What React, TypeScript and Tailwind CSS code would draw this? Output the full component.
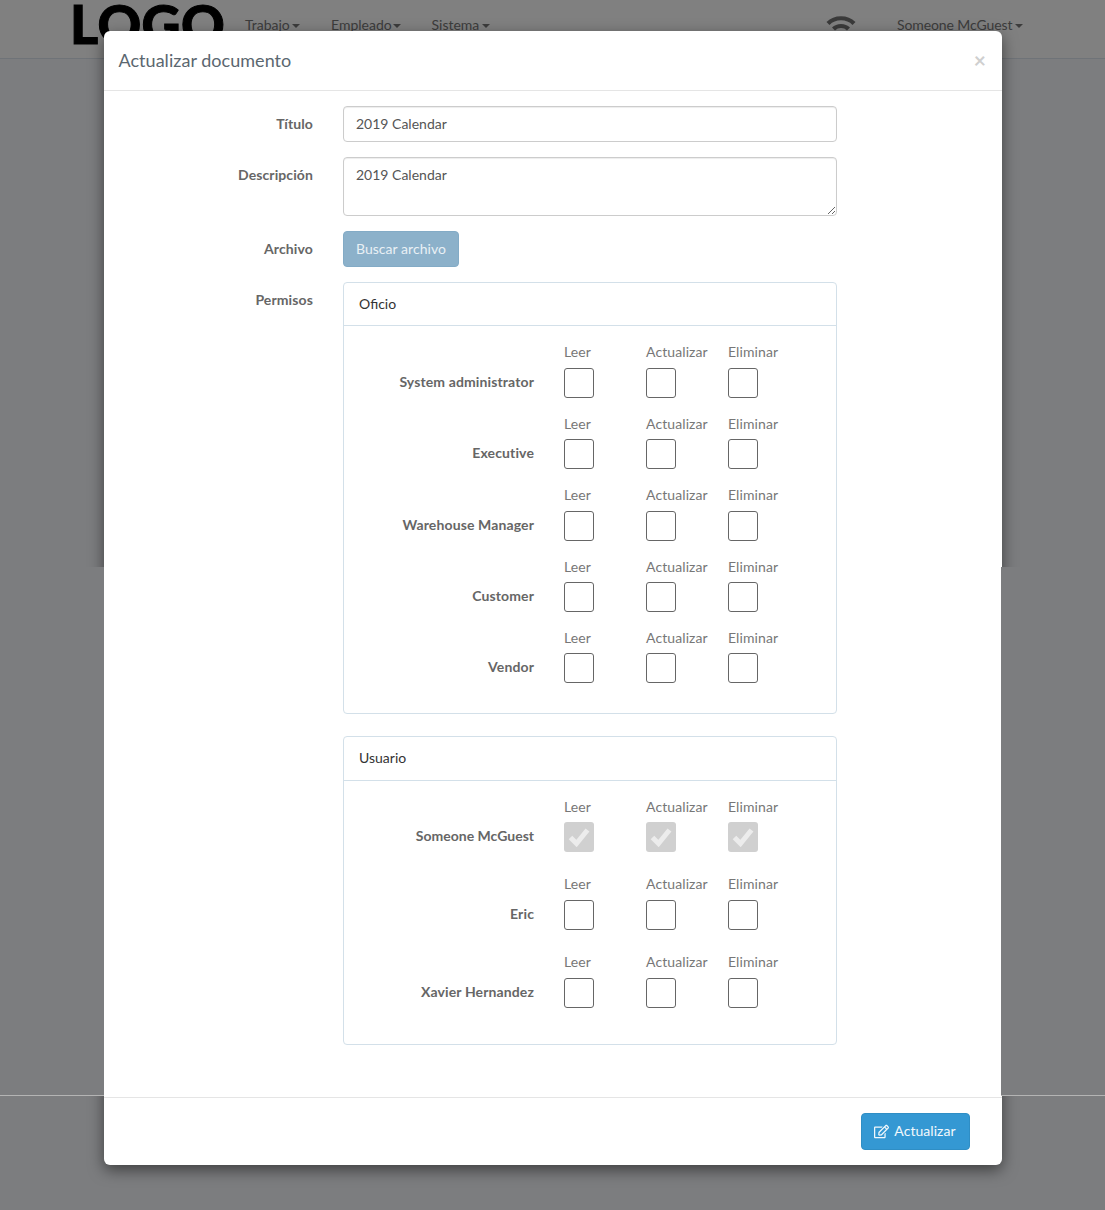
import React from "react";
import { FaRegEdit } from "react-icons/fa";

const perms = ["Leer", "Actualizar", "Eliminar"];
const roles = ["System administrator", "Executive", "Warehouse Manager", "Customer", "Vendor"];
const users = ["Someone McGuest", "Eric", "Xavier Hernandez"];

const Caret: React.FC<{ className?: string }> = ({ className = "ml-[2px]" }) => (
  <span className={"inline-block h-0 w-0 border-x-4 border-t-4 border-x-transparent border-t-[#3c3c3c] align-middle " + className} />
);

const PermRow: React.FC<{ name: string; checked?: boolean; tall?: boolean }> = ({ name, checked, tall }) => (
  <div className={tall ? "flex h-[77.6px]" : "flex h-[71.45px]"}>
    <div
      className={
        "w-[190px] shrink-0 text-right font-bold text-[#666] " +
        (tall ? "pt-[29.4px] " : "pt-[29.65px] ") +
        (checked ? "tracking-normal" : "tracking-[0.12px]")
      }
    >
      {name}
    </div>
    <div className="ml-[30px] flex">
      {perms.map((p) => (
        <div key={p} className="w-[82px] shrink-0">
          <div className={tall ? "mt-[-0.2px] h-[20px] tracking-[0.1px] text-[#777]" : "h-[20px] pt-[0.2px] tracking-[0.1px] text-[#777]"}>{p}</div>
          <div
            className={
              checked
                ? "mt-[5.6px] flex h-[30px] w-[30px] items-center justify-center rounded-[3px] bg-[#d0d0d0]"
                : tall
                  ? "mt-[5.6px] h-[30px] w-[30px] rounded-[3px] border border-[#666] bg-white"
                  : "mt-[5.63px] h-[30px] w-[30px] rounded-[3px] border border-[#666] bg-white"
            }
          >
            {checked && (
              <svg viewBox="0 0 22 20" className="h-[20px] w-[22px]" fill="none" stroke="#ececec" strokeWidth="5">
                <path d="M2.5 10.5L8.5 16.5L19.5 3" />
              </svg>
            )}
          </div>
        </div>
      ))}
    </div>
  </div>
);

const Panel: React.FC<{ title: string; children: React.ReactNode; className: string; headClass: string }> = ({
  title,
  children,
  className,
  headClass,
}) => (
  <div className={"w-[494px] rounded-[4px] border border-[#d3e0e9] bg-white " + className}>
    <div className={"flex items-center border-b border-[#d3e0e9] px-[15px] text-[#333] " + headClass}>{title}</div>
    {children}
  </div>
);

export default function App() {
  return (
    <div className="relative h-[1210px] w-[1105px] overflow-hidden bg-[#7c7d7f] font-['Lato',sans-serif] text-[14px] leading-5">
      {/* page behind the backdrop */}
      <div className="flex h-[59px] items-start border-b border-[#6f7378] bg-[#808080] text-[#3c3c3c]">
        <div className="ml-[70px] mt-[-8px] w-[175px] text-[54px] font-black leading-[64px] tracking-[0.4px] text-black [-webkit-text-stroke:1px_#000]">
          LOGO
        </div>
        <div className="mt-[15px] w-[86px]">Trabajo<Caret /></div>
        <div className="mt-[15px] w-[100.5px]">Empleado<Caret className="ml-[1px]" /></div>
        <div className="mt-[15px] w-[394.5px]">Sistema<Caret className="ml-[3px]" /></div>
        <svg viewBox="0 0 30 24" className="mt-[15px] h-[24px] w-[30px] text-[#3a3a3a]" fill="none" stroke="currentColor" strokeWidth="4.2">
          <path d="M2 8.5C9 1.5 21 1.5 28 8.5" />
          <path d="M7.5 14C11.5 10 18.5 10 22.5 14" />
          <circle cx="15" cy="20" r="3" fill="currentColor" stroke="none" />
        </svg>
        <div className="ml-[41px] mt-[15px] tracking-[-0.1px]">Someone McGuest<Caret className="ml-[3px]" /></div>
      </div>

      {/* modal */}
      <div className="absolute left-[104px] top-[31px] h-[1134px] w-[898px] rounded-[6px] bg-white text-[#555] shadow-[0_5px_15px_rgba(0,0,0,0.5)]">
        <div className="flex h-[60px] items-center justify-between border-b border-[#e5e5e5] pl-[14.5px] pr-[16px]">
          <div className="mt-[-2px] text-[18px] tracking-[0.03px] text-[#5b6770]">Actualizar documento</div>
          <div className="mt-[-2px] text-[21px] font-bold text-[#cfcfcf]">×</div>
        </div>

        <div className="mt-[15px] flex">
          <div className="w-[209px] shrink-0 pt-[8px] text-right font-bold tracking-[0.12px] text-[#666]">Título</div>
          <div className="ml-[30px] flex h-[36px] w-[494px] items-center rounded-[4px] border border-[#ccc] px-[12px] shadow-[inset_0_1px_1px_rgba(0,0,0,0.075)]">
            2019 Calendar
          </div>
        </div>

        <div className="mt-[15px] flex">
          <div className="w-[209px] shrink-0 pt-[8px] text-right font-bold tracking-[0.1px] text-[#666]">Descripción</div>
          <textarea
            readOnly
            value="2019 Calendar"
            className="ml-[30px] h-[59px] w-[494px] rounded-[4px] border border-[#ccc] px-[12px] py-[7px] shadow-[inset_0_1px_1px_rgba(0,0,0,0.075)] outline-none"
          />
        </div>

        <div className="mt-[15px] flex">
          <div className="w-[209px] shrink-0 pt-[8px] text-right font-bold tracking-[0.12px] text-[#666]">Archivo</div>
          <div className="ml-[30px] flex h-[36px] w-[116px] items-center justify-center rounded-[4px] border border-[#83abc6] bg-[#8cb1ca] tracking-[0.05px] text-[#e9f0f5]">
            Buscar archivo
          </div>
        </div>

        <div className="mt-[15px] flex">
          <div className="w-[209px] shrink-0 pt-[8px] text-right font-bold tracking-[0.12px] text-[#666]">Permisos</div>
          <div className="ml-[30px]">
            <Panel title="Oficio" className="h-[432px]" headClass="h-[43px]">
              <div className="pt-[16px]">
                {roles.map((r) => (
                  <PermRow key={r} name={r} />
                ))}
              </div>
            </Panel>
            <Panel title="Usuario" className="mt-[22px] h-[309px]" headClass="h-[44px] pb-[1px]">
              <div className="pt-[16px]">
                {users.map((u, i) => (
                  <PermRow key={u} name={u} tall checked={i === 0} />
                ))}
              </div>
            </Panel>
          </div>
        </div>

        <div className="absolute bottom-0 left-0 right-0 flex h-[68px] items-start justify-end border-t border-[#e5e5e5] pr-[32px] pt-[15px]">
          <div className="flex h-[37px] w-[109px] items-center justify-center gap-[5px] rounded-[4px] border border-[#2f8ec5] bg-[#3498d3] pb-[1px] pr-[1px] tracking-[0.05px] text-[#f2f8fc]">
            <FaRegEdit className="text-[15px]" />
            Actualizar
          </div>
        </div>
      </div>

      {/* the stretch of the page that sits over the modal shadow */}
      <div className="absolute left-0 top-[567px] h-[529px] w-[104px] border-b border-[#b4b4b4] bg-[#7c7d7f]" />
      <div className="absolute left-[1001px] top-[567px] h-[529px] w-[104px] border-b border-[#b4b4b4] bg-[#7c7d7f]" />
    </div>
  );
}
